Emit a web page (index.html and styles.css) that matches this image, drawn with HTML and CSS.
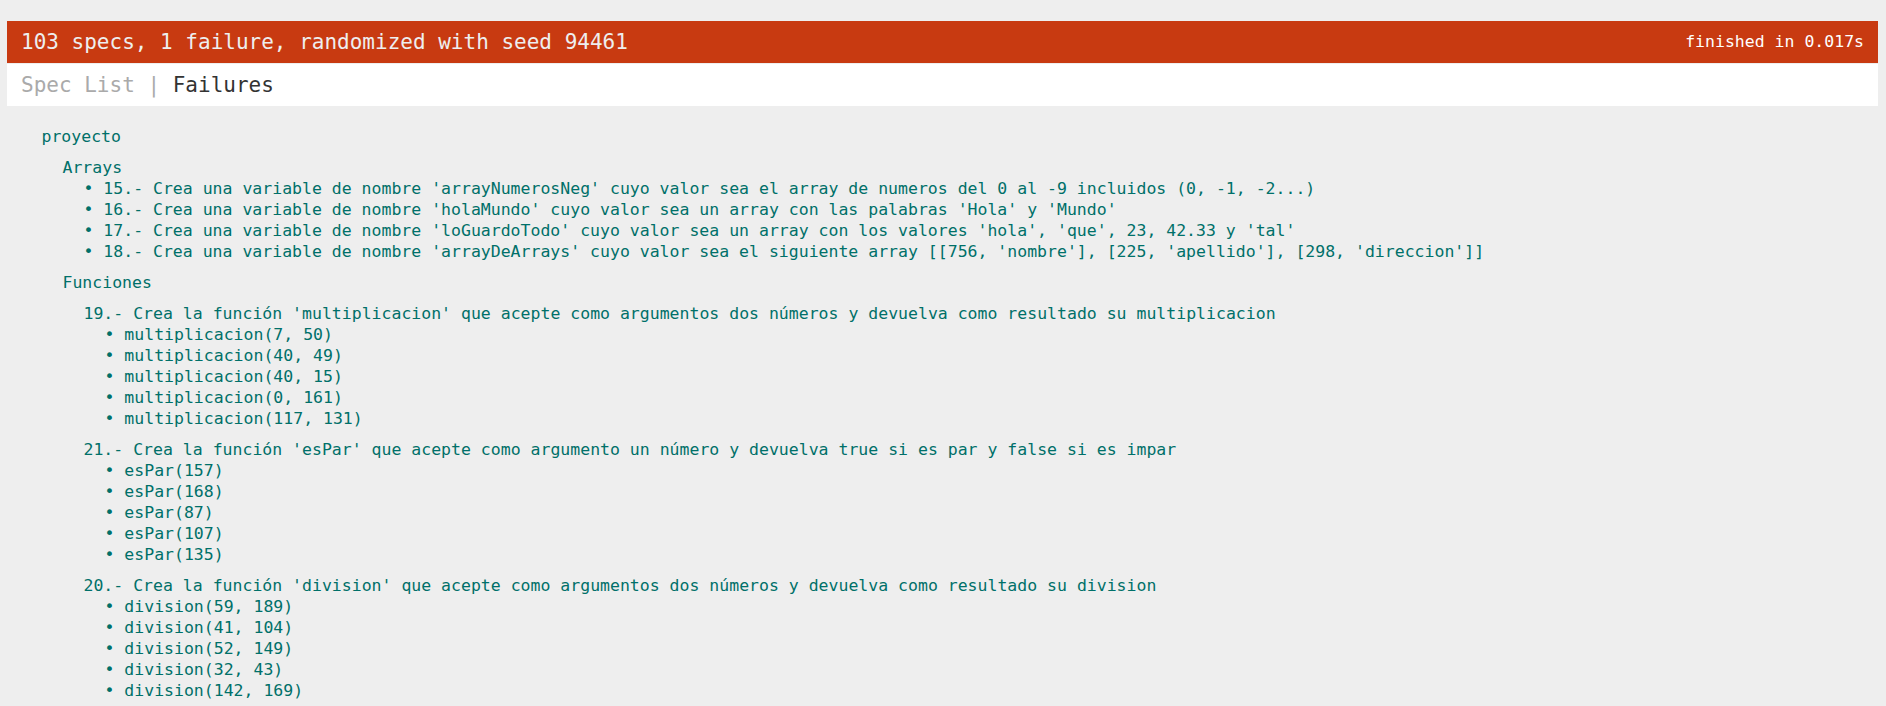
FILE: index.html
```html
<!DOCTYPE html>
<html lang="es">
<head>
<meta charset="utf-8">
<title>Jasmine Spec Runner</title>
<link rel="stylesheet" href="styles.css">
</head>
<body>
<div class="reporter">
  <div class="bar failed">
    <span class="overall">103 specs, 1 failure, randomized with seed 94461</span>
    <span class="duration">finished in 0.017s</span>
  </div>
  <div class="bar menu">Spec List | <a class="menu-link">Failures</a></div>

  <div class="summary">
    <div class="suite">
      <div class="suite-name">proyecto</div>
      <div class="suite">
        <div class="suite-name">Arrays</div>
        <ul class="specs">
          <li class="spec">15.- Crea una variable de nombre 'arrayNumerosNeg' cuyo valor sea el array de numeros del 0 al -9 incluidos (0, -1, -2...)</li>
          <li class="spec">16.- Crea una variable de nombre 'holaMundo' cuyo valor sea un array con las palabras 'Hola' y 'Mundo'</li>
          <li class="spec">17.- Crea una variable de nombre 'loGuardoTodo' cuyo valor sea un array con los valores 'hola', 'que', 23, 42.33 y 'tal'</li>
          <li class="spec">18.- Crea una variable de nombre 'arrayDeArrays' cuyo valor sea el siguiente array [[756, 'nombre'], [225, 'apellido'], [298, 'direccion']]</li>
        </ul>
      </div>
      <div class="suite">
        <div class="suite-name">Funciones</div>
        <div class="suite">
          <div class="suite-name">19.- Crea la función 'multiplicacion' que acepte como argumentos dos números y devuelva como resultado su multiplicacion</div>
          <ul class="specs">
            <li class="spec">multiplicacion(7, 50)</li>
            <li class="spec">multiplicacion(40, 49)</li>
            <li class="spec">multiplicacion(40, 15)</li>
            <li class="spec">multiplicacion(0, 161)</li>
            <li class="spec">multiplicacion(117, 131)</li>
          </ul>
        </div>
        <div class="suite">
          <div class="suite-name">21.- Crea la función 'esPar' que acepte como argumento un número y devuelva true si es par y false si es impar</div>
          <ul class="specs">
            <li class="spec">esPar(157)</li>
            <li class="spec">esPar(168)</li>
            <li class="spec">esPar(87)</li>
            <li class="spec">esPar(107)</li>
            <li class="spec">esPar(135)</li>
          </ul>
        </div>
        <div class="suite">
          <div class="suite-name">20.- Crea la función 'division' que acepte como argumentos dos números y devuelva como resultado su division</div>
          <ul class="specs">
            <li class="spec">division(59, 189)</li>
            <li class="spec">division(41, 104)</li>
            <li class="spec">division(52, 149)</li>
            <li class="spec">division(32, 43)</li>
            <li class="spec">division(142, 169)</li>
          </ul>
        </div>
      </div>
    </div>
  </div>
</div>
</body>
</html>
```
FILE: styles.css
```css
html, body {
  margin: 0;
  padding: 0;
  background: #eeeeee;
  overflow: hidden;
}

.reporter {
  padding: 21px 8px 0 7px;
  font-family: "DejaVu Sans Mono", "Liberation Mono", monospace;
  font-size: 16.5px;
  line-height: 21px;
  color: #333333;
}

.bar {
  display: flex;
  justify-content: space-between;
  align-items: center;
  font-size: 21px;
  line-height: 42px;
  height: 42px;
  padding: 0 14px;
  white-space: nowrap;
}

.bar.failed {
  background: #c83a11;
  color: #eeeeee;
  border-bottom: 1px solid #eeeeee;
}

.duration {
  color: #ffffff;
  font-size: 16.5px;
}

.bar.menu {
  background: #ffffff;
  color: #aaaaaa;
  justify-content: flex-start;
  white-space: pre;
}

.menu-link {
  color: #333333;
}

.summary {
  margin-top: 20px;
  padding: 0 13.5px;
}

.suite {
  margin: 10px 0 10px 21px;
}

.suite-name {
  color: #007069;
  white-space: nowrap;
}

.specs {
  list-style: none;
  margin: 0 0 0 21px;
  padding: 0;
}

.spec {
  color: #007069;
  white-space: nowrap;
}

.spec::before {
  content: "\2022";
  padding-right: 0.6em;
}
```
